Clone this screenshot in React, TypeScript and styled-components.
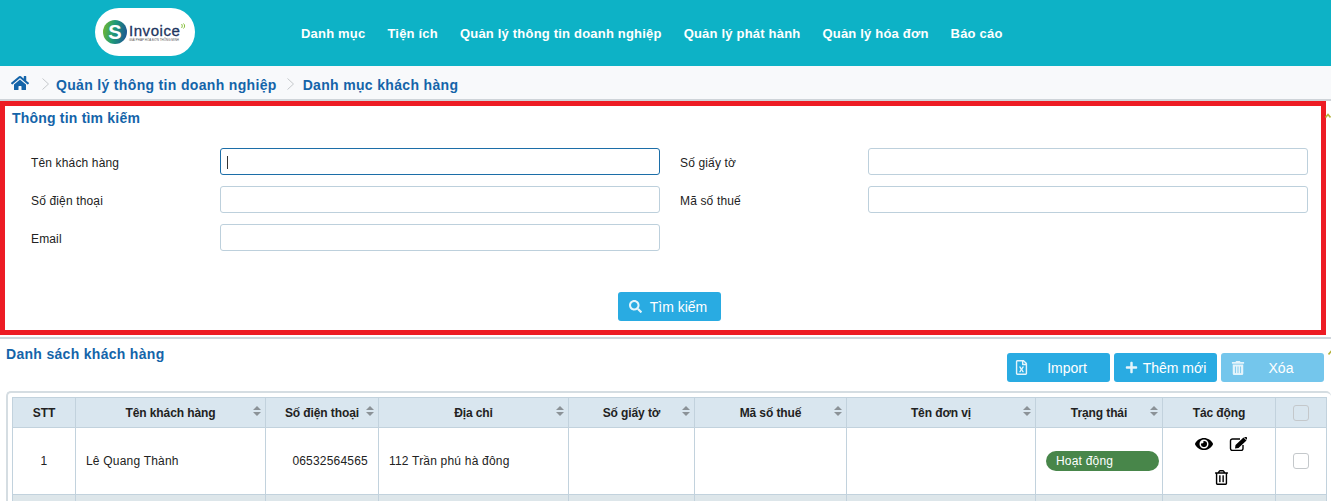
import styled, { createGlobalStyle } from "styled-components";
import {
  FaHome,
  FaSearch,
  FaPlus,
  FaTrashAlt,
  FaEye,
  FaRegTrashAlt,
  FaRegFileExcel,
} from "react-icons/fa";

const GlobalStyle = createGlobalStyle`
  html, body {
    margin: 0;
    padding: 0;
    height: 501px;
    overflow: hidden;
    background: #ffffff;
    font-family: "Liberation Sans", Arial, sans-serif;
    color: #222222;
  }
`;

const Header = styled.header`
  height: 66px;
  background: #0db2c6;
  display: flex;
  align-items: flex-start;
  padding-left: 95px;
`;

const LogoPill = styled.div`
  width: 100px;
  height: 48px;
  margin-top: 8px;
  border-radius: 24px;
  background: #ffffff;
  display: flex;
  align-items: center;
  padding-left: 8px;
  box-sizing: border-box;
  position: relative;
`;

const LogoMark = styled.div`
  width: 24px;
  height: 24px;
  border-radius: 50%;
  background: linear-gradient(100deg, #7ab929 0%, #1f9a78 45%, #1c4f96 100%);
  color: #ffffff;
  font-size: 20px;
  font-weight: 700;
  line-height: 24px;
  text-align: center;
  flex: none;
`;

const LogoText = styled.div`
  margin-left: 2px;
  margin-top: 2px;
  color: #1d3560;
  display: flex;
  flex-direction: column;
`;

const LogoName = styled.span`
  font-size: 15px;
  letter-spacing: 0.55px;
  line-height: 14px;
  -webkit-text-stroke: 0.3px #1d3560;
`;

const LogoSlogan = styled.span`
  font-size: 3px;
  line-height: 4px;
  color: #555555;
`;

const LogoWaves = styled.svg`
  position: absolute;
  left: 86px;
  top: 15px;
  width: 5px;
  height: 6px;
  fill: none;
  stroke: #7ab929;
  stroke-width: 0.9;
`;

const Nav = styled.nav`
  display: flex;
  gap: 22px;
  margin-left: 106px;
  height: 66px;
  align-items: center;
`;

const NavItem = styled.a`
  color: #ffffff;
  font-size: 13px;
  font-weight: 700;
  letter-spacing: 0.2px;
`;

const Breadcrumb = styled.div`
  box-sizing: border-box;
  height: 35px;
  background: #f8f9fb;
  border-bottom: 2px solid #cfd4d9;
  display: flex;
  align-items: center;
  padding-left: 11px;
  color: #1464a9;
  font-size: 14px;
  font-weight: 700;
  letter-spacing: 0.33px;
`;

const Crumb = styled.span`
  margin-top: 5px;
`;

const CrumbArrow = styled.svg<{ $tight?: boolean }>`
  width: 9px;
  height: 14px;
  margin: 2px ${(p) => (p.$tight ? "6px" : "8px")} 0 9px;
  fill: none;
  stroke: #c6c9cc;
  stroke-width: 1;
`;

const CrumbHome = styled(FaHome)`
  font-size: 18px;
  margin-right: 3px;
  color: #1464a9;
`;

const SearchPanel = styled.section`
  width: 1326px;
  height: 234px;
  box-sizing: border-box;
  border: 5px solid #ed1c24;
  padding: 4px 0 0 7px;
  position: relative;
`;

const SectionTitle = styled.h2`
  margin: 0;
  color: #1464a9;
  font-size: 14px;
  font-weight: 700;
  letter-spacing: 0.2px;
  line-height: 16px;
`;

const ListTitle = styled(SectionTitle)`
  letter-spacing: 0.3px;
`;

const CollapseMark = styled.svg<{ $top: number; $right: number }>`
  position: absolute;
  right: ${(p) => p.$right}px;
  top: ${(p) => p.$top}px;
  width: 6px;
  height: 6px;
  fill: none;
  stroke: #b5b33b;
  stroke-width: 1.6;
`;

const FormGrid = styled.div`
  display: grid;
  grid-template-columns: 189px 440px 208px 440px;
  grid-auto-rows: 27px;
  row-gap: 11px;
  margin: 22px 0 0 19px;
`;

const FieldLabel = styled.label<{ $second?: boolean }>`
  font-size: 12px;
  letter-spacing: 0.15px;
  color: #222222;
  display: flex;
  align-items: center;
  padding-top: 2px;
  padding-left: ${(p) => (p.$second ? "20px" : "0")};
`;

const TextInput = styled.input<{ $focused?: boolean }>`
  box-sizing: border-box;
  width: 440px;
  height: 27px;
  border: 1px solid ${(p) => (p.$focused ? "#1c6ea8" : "#bdd0dc")};
  border-radius: 3px;
  background: #ffffff;
  outline: none;
  padding: 0 6px;
  font: 12px "Liberation Sans", Arial, sans-serif;
`;

const Caret = styled.span`
  position: absolute;
  left: 222px;
  top: 50px;
  width: 1px;
  height: 13px;
  background: #333333;
`;

const SearchActions = styled.div`
  display: flex;
  justify-content: center;
  margin-top: 41px;
  padding-left: 6px;
`;

const ActionButton = styled.button<{ $disabled?: boolean; $shift?: number }>`
  width: 103px;
  height: 29px;
  border: 0;
  border-radius: 3px;
  background: ${(p) => (p.$disabled ? "#74c6ec" : "#29abe2")};
  color: #ffffff;
  font: 14px "Liberation Sans", Arial, sans-serif;
  display: flex;
  align-items: center;
  justify-content: center;
  padding: 0 ${(p) => p.$shift || 0}px 0 0;
`;

const ButtonIcon = styled.span<{ $gap: number; $size?: number }>`
  display: inline-flex;
  margin-right: ${(p) => p.$gap}px;
  font-size: ${(p) => p.$size || 13}px;
  color: #e4f4fb;
`;

const ListSection = styled.section`
  border-top: 2px solid #cfd6dc;
  margin-top: 2px;
  padding: 7px 0 0 6px;
  position: relative;
`;

const ListHead = styled.div`
  display: flex;
  justify-content: space-between;
  align-items: flex-start;
  padding-right: 7px;
  height: 45px;
`;

const Toolbar = styled.div`
  display: flex;
  gap: 4px;
  margin-top: 7px;
`;

const TableFrame = styled.div`
  border: 2px solid #d5dde2;
  border-right: 0;
  border-bottom: 0;
  border-radius: 5px 5px 0 0;
  padding: 4px 0 0 4px;
`;

const Table = styled.table`
  width: 1314px;
  table-layout: fixed;
  border-collapse: collapse;
  font-size: 12px;
`;

const HeadCell = styled.th`
  height: 29px;
  padding: 0 2px;
  background: #d9e6ef;
  border: 1px solid #c2d2dd;
  font-size: 12px;
  font-weight: 700;
  letter-spacing: -0.1px;
  color: #222222;
  text-align: center;
  position: relative;
`;

const SortIcon = styled.svg`
  position: absolute;
  right: 4px;
  top: 8px;
  width: 8px;
  height: 10px;
  fill: #8b9297;
`;

const BodyCell = styled.td<{ $align?: string }>`
  height: 66px;
  padding: 0 10px;
  border: 1px solid #c2d2dd;
  text-align: ${(p) => p.$align || "left"};
  color: #222222;
  letter-spacing: 0.2px;
`;

const FillerCell = styled.td`
  height: 6px;
  padding: 0;
  background: #dde6ea;
  border: 1px solid #c2d2dd;
  border-bottom: 0;
`;

const StatusBadge = styled.div`
  width: 113px;
  height: 20px;
  border-radius: 10px;
  background: #48864a;
  color: #ffffff;
  font-size: 12px;
  line-height: 20px;
  text-align: left;
  padding-left: 10px;
  box-sizing: border-box;
`;

const RowActions = styled.div`
  display: grid;
  grid-template-columns: 18px 18px;
  justify-content: center;
  justify-items: center;
  align-items: center;
  column-gap: 16px;
  row-gap: 17px;
  padding-left: 4px;
  margin-top: -2px;
  color: #000000;
`;

const ViewIcon = styled(FaEye)`
  font-size: 18px;
`;

const EditIcon = styled.svg`
  width: 18px;
  height: 14px;
`;

const RemoveIcon = styled(FaRegTrashAlt)`
  grid-column: 1 / span 2;
  font-size: 15px;
`;

const Check = styled.span<{ $head?: boolean }>`
  display: block;
  box-sizing: border-box;
  width: 16px;
  height: 16px;
  margin: 0 auto;
  border: 1px solid #c4c8cb;
  border-radius: 3px;
  background: ${(p) => (p.$head ? "#d9e6ef" : "#ffffff")};
`;

const columns: { title: string; width: number; sortable: boolean }[] = [
  { title: "STT", width: 63, sortable: false },
  { title: "Tên khách hàng", width: 190, sortable: true },
  { title: "Số điện thoại", width: 113, sortable: true },
  { title: "Địa chỉ", width: 190, sortable: true },
  { title: "Số giấy tờ", width: 126, sortable: true },
  { title: "Mã số thuế", width: 152, sortable: true },
  { title: "Tên đơn vị", width: 189, sortable: true },
  { title: "Trạng thái", width: 127, sortable: true },
  { title: "Tác động", width: 113, sortable: false },
];

export default function App() {
  return (
    <>
      <GlobalStyle />
      <Header>
        <LogoPill>
          <LogoMark>S</LogoMark>
          <LogoText>
            <LogoName>Invoice</LogoName>
            <LogoSlogan>GIẢI PHÁP HÓA ĐƠN THÔNG MINH</LogoSlogan>
          </LogoText>
          <LogoWaves viewBox="0 0 5 6">
            <path d="M0.5 1C1.5 2 1.5 4 0.5 5M2.5 0.5C4 2 4 4 2.5 5.5" />
          </LogoWaves>
        </LogoPill>
        <Nav>
          <NavItem>Danh mục</NavItem>
          <NavItem>Tiện ích</NavItem>
          <NavItem>Quản lý thông tin doanh nghiệp</NavItem>
          <NavItem>Quản lý phát hành</NavItem>
          <NavItem>Quản lý hóa đơn</NavItem>
          <NavItem>Báo cáo</NavItem>
        </Nav>
      </Header>

      <Breadcrumb>
        <CrumbHome />
        <CrumbArrow viewBox="0 0 9 14" $tight>
          <path d="M1.5 1.5 7.5 7l-6 5.5" />
        </CrumbArrow>
        <Crumb>Quản lý thông tin doanh nghiệp</Crumb>
        <CrumbArrow viewBox="0 0 9 14">
          <path d="M1.5 1.5 7.5 7l-6 5.5" />
        </CrumbArrow>
        <Crumb>Danh mục khách hàng</Crumb>
      </Breadcrumb>

      <SearchPanel>
        <SectionTitle>Thông tin tìm kiếm</SectionTitle>
        <CollapseMark viewBox="0 0 6 6" $top={7} $right={-10}>
          <path d="M0.5 4.5 3 1.5l2.5 3" />
        </CollapseMark>
        <Caret />
        <FormGrid>
          <FieldLabel>Tên khách hàng</FieldLabel>
          <TextInput $focused />
          <FieldLabel $second>Số giấy tờ</FieldLabel>
          <TextInput />
          <FieldLabel>Số điện thoại</FieldLabel>
          <TextInput />
          <FieldLabel $second>Mã số thuế</FieldLabel>
          <TextInput />
          <FieldLabel>Email</FieldLabel>
          <TextInput />
        </FormGrid>
        <SearchActions>
          <ActionButton $shift={3}>
            <ButtonIcon $gap={8}>
              <FaSearch />
            </ButtonIcon>
            Tìm kiếm
          </ActionButton>
        </SearchActions>
      </SearchPanel>

      <ListSection>
        <CollapseMark viewBox="0 0 6 6" $top={11} $right={-3}>
          <path d="M0.5 4.5 3 1.5l2.5 3" />
        </CollapseMark>
        <ListHead>
          <ListTitle>Danh sách khách hàng</ListTitle>
          <Toolbar>
            <ActionButton $shift={16}>
              <ButtonIcon $gap={18} $size={15}>
                <FaRegFileExcel />
              </ButtonIcon>
              Import
            </ActionButton>
            <ActionButton>
              <ButtonIcon $gap={5}>
                <FaPlus />
              </ButtonIcon>
              Thêm mới
            </ActionButton>
            <ActionButton $disabled $shift={21}>
              <ButtonIcon $gap={24} $size={14}>
                <FaTrashAlt />
              </ButtonIcon>
              Xóa
            </ActionButton>
          </Toolbar>
        </ListHead>
        <TableFrame>
          <Table>
            <colgroup>
              {columns.map((c) => (
                <col key={c.title} width={c.width} />
              ))}
              <col width={51} />
            </colgroup>
            <thead>
              <tr>
                {columns.map((c) => (
                  <HeadCell key={c.title}>
                    {c.title}
                    {c.sortable && (
                      <SortIcon viewBox="0 0 8 10">
                        <path d="M4 0 8 4H0zM0 6h8l-4 4z" />
                      </SortIcon>
                    )}
                  </HeadCell>
                ))}
                <HeadCell>
                  <Check $head />
                </HeadCell>
              </tr>
            </thead>
            <tbody>
              <tr>
                <BodyCell $align="center">1</BodyCell>
                <BodyCell>Lê Quang Thành</BodyCell>
                <BodyCell $align="right">06532564565</BodyCell>
                <BodyCell>112 Trần phú hà đông</BodyCell>
                <BodyCell />
                <BodyCell />
                <BodyCell />
                <BodyCell $align="center">
                  <StatusBadge>Hoạt động</StatusBadge>
                </BodyCell>
                <BodyCell>
                  <RowActions>
                    <ViewIcon />
                    <EditIcon viewBox="0 0 18 14">
                      <path
                        d="M11 2H3.5A2 2 0 0 0 1.500 4v7.500a2 2 0 0 0 2 2H12a2 2 0 0 0 2-2V8"
                        fill="none"
                        stroke="#000000"
                        strokeWidth="1.4"
                      />
                      <path d="M14.500 0.500 17.500 3.500 9.500 11 6 11.500 6.500 8zM15 .1l2.600 2.600 .4-.6a1.200 1.200 0 0 0 0-1.500l-.6-.5a1.200 1.200 0 0 0-1.600 0z" />
                    </EditIcon>
                    <RemoveIcon />
                  </RowActions>
                </BodyCell>
                <BodyCell>
                  <Check />
                </BodyCell>
              </tr>
              <tr>
                {[...columns, { title: "check" }].map((c) => (
                  <FillerCell key={c.title} />
                ))}
              </tr>
            </tbody>
          </Table>
        </TableFrame>
      </ListSection>
    </>
  );
}
